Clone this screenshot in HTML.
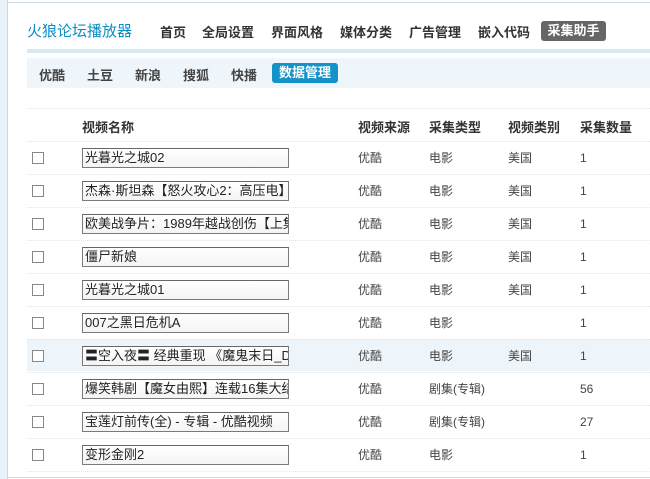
<!DOCTYPE html>
<html><head><meta charset="utf-8"><style>
body{margin:0;width:650px;height:479px;overflow:hidden;background:#fff;font-family:"Liberation Sans","Noto Sans CJK SC","WenQuanYi Zen Hei",sans-serif;font-size:13px;color:#333;position:relative}
.a{position:absolute;white-space:nowrap}
.nav{top:22px;font-weight:bold;font-size:13px;color:#333}
.sub{top:65px;font-weight:bold;font-size:13px;color:#444}
.hd{top:117px;font-weight:bold;font-size:13px;color:#333}
.cb{position:absolute;left:32px;width:10px;height:10px;border:1px solid #888;background:#fff}
.in{position:absolute;left:82px;width:203px;height:18px;border:1px solid #7a7a7a;border-top-color:#666;background:linear-gradient(#fff,#f4f4f4);font-size:13px;line-height:18px;padding-left:2px;overflow:hidden;white-space:nowrap;color:#222}
.c{position:absolute;font-size:12px;color:#444}
.sep{position:absolute;left:27px;right:0;border-top:1px dotted #dde6ee}
</style></head><body>
<div class="a" style="left:0;top:0;width:7px;height:479px;background:#eaf2f9;border-right:1px solid #c9d9e6"></div>
<div class="a" style="left:8px;top:2px;right:0;height:0;border-top:1px solid #c9d9e6"></div>
<div class="a" style="left:27px;top:20px;font-size:15px;color:#0a8fc6;font-weight:normal">火狼论坛播放器</div>
<div class="a nav" style="left:160px">首页</div>
<div class="a nav" style="left:202px">全局设置</div>
<div class="a nav" style="left:271px">界面风格</div>
<div class="a nav" style="left:340px">媒体分类</div>
<div class="a nav" style="left:409px">广告管理</div>
<div class="a nav" style="left:478px">嵌入代码</div>
<div class="a" style="left:541px;top:21px;width:65px;height:20px;background:#666;border-radius:3px;color:#fff;font-weight:bold;text-align:center;line-height:20px">采集助手</div>
<div class="a" style="left:27px;top:49px;right:0;height:4px;background:#d8e9f6"></div>
<div class="a" style="left:27px;top:58px;right:0;height:30px;background:#eef5fb"></div>
<div class="a sub" style="left:39px">优酷</div>
<div class="a sub" style="left:87px">土豆</div>
<div class="a sub" style="left:135px">新浪</div>
<div class="a sub" style="left:183px">搜狐</div>
<div class="a sub" style="left:231px">快播</div>
<div class="a" style="left:272px;top:63px;width:66px;height:20px;background:#1493c8;border-radius:3px;color:#fff;font-weight:bold;text-align:center;line-height:20px">数据管理</div>
<div class="sep" style="top:108px"></div>
<div class="a hd" style="left:82px">视频名称</div>
<div class="a hd" style="left:358px">视频来源</div>
<div class="a hd" style="left:429px">采集类型</div>
<div class="a hd" style="left:508px">视频类别</div>
<div class="a hd" style="left:580px">采集数量</div>
<div class="sep" style="top:141px"></div>
<div class="a" style="left:27px;top:339px;right:0;height:32px;background:#eef5fa"></div>

<div class="cb" style="top:152px"></div><div class="in" style="top:148px">光暮光之城02</div><div class="c" style="left:358px;top:149px">优酷</div><div class="c" style="left:429px;top:149px">电影</div><div class="c" style="left:508px;top:149px">美国</div><div class="c" style="left:580px;top:151px">1</div><div class="sep" style="top:174px"></div>
<div class="cb" style="top:185px"></div><div class="in" style="top:181px">杰森·斯坦森【怒火攻心2：高压电】全</div><div class="c" style="left:358px;top:182px">优酷</div><div class="c" style="left:429px;top:182px">电影</div><div class="c" style="left:508px;top:182px">美国</div><div class="c" style="left:580px;top:184px">1</div><div class="sep" style="top:207px"></div>
<div class="cb" style="top:218px"></div><div class="in" style="top:214px">欧美战争片：1989年越战创伤【上集</div><div class="c" style="left:358px;top:215px">优酷</div><div class="c" style="left:429px;top:215px">电影</div><div class="c" style="left:508px;top:215px">美国</div><div class="c" style="left:580px;top:217px">1</div><div class="sep" style="top:240px"></div>
<div class="cb" style="top:251px"></div><div class="in" style="top:247px">僵尸新娘</div><div class="c" style="left:358px;top:248px">优酷</div><div class="c" style="left:429px;top:248px">电影</div><div class="c" style="left:508px;top:248px">美国</div><div class="c" style="left:580px;top:250px">1</div><div class="sep" style="top:273px"></div>
<div class="cb" style="top:284px"></div><div class="in" style="top:280px">光暮光之城01</div><div class="c" style="left:358px;top:281px">优酷</div><div class="c" style="left:429px;top:281px">电影</div><div class="c" style="left:508px;top:281px">美国</div><div class="c" style="left:580px;top:283px">1</div><div class="sep" style="top:306px"></div>
<div class="cb" style="top:317px"></div><div class="in" style="top:313px">007之黑日危机A</div><div class="c" style="left:358px;top:314px">优酷</div><div class="c" style="left:429px;top:314px">电影</div><div class="c" style="left:580px;top:316px">1</div><div class="sep" style="top:339px"></div>
<div class="cb" style="top:350px"></div><div class="in" style="top:346px">〓空入夜〓 经典重现 《魔鬼末日_DV</div><div class="c" style="left:358px;top:347px">优酷</div><div class="c" style="left:429px;top:347px">电影</div><div class="c" style="left:508px;top:347px">美国</div><div class="c" style="left:580px;top:349px">1</div><div class="sep" style="top:372px"></div>
<div class="cb" style="top:383px"></div><div class="in" style="top:379px">爆笑韩剧【魔女由熙】连载16集大结局</div><div class="c" style="left:358px;top:380px">优酷</div><div class="c" style="left:429px;top:380px">剧集(专辑)</div><div class="c" style="left:580px;top:382px">56</div><div class="sep" style="top:405px"></div>
<div class="cb" style="top:416px"></div><div class="in" style="top:412px">宝莲灯前传(全) - 专辑 - 优酷视频</div><div class="c" style="left:358px;top:413px">优酷</div><div class="c" style="left:429px;top:413px">剧集(专辑)</div><div class="c" style="left:580px;top:415px">27</div><div class="sep" style="top:438px"></div>
<div class="cb" style="top:449px"></div><div class="in" style="top:445px">变形金刚2</div><div class="c" style="left:358px;top:446px">优酷</div><div class="c" style="left:429px;top:446px">电影</div><div class="c" style="left:580px;top:448px">1</div><div class="sep" style="top:471px"></div>
<div class="a" style="left:8px;top:477px;right:0;height:0;border-top:1px solid #c9d9e6"></div>
</body></html>
